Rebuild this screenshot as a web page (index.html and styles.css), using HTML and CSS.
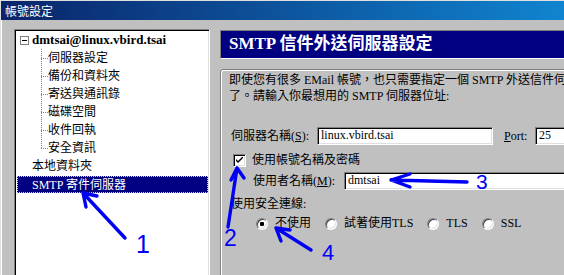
FILE: index.html
```html
<!DOCTYPE html>
<html lang="zh-Hant">
<head>
<meta charset="utf-8">
<title>帳號設定</title>
<link rel="stylesheet" href="styles.css">
</head>
<body>
<div class="window">
  <div class="titlebar">帳號設定</div>
  <div class="content">
    <div class="tree">
      <div class="row account"><span class="expander"><span class="minus"></span></span><span class="acct-name">dmtsai@linux.vbird.tsai</span></div>
      <div class="row child">伺服器設定</div>
      <div class="row child">備份和資料夾</div>
      <div class="row child">寄送與通訊錄</div>
      <div class="row child">磁碟空間</div>
      <div class="row child">收件回執</div>
      <div class="row child last">安全資訊</div>
      <div class="row top">本地資料夾</div>
      <div class="row top selected">SMTP 寄件伺服器</div>
    </div>
    <div class="main">
      <div class="header">SMTP 信件外送伺服器設定</div>
      <div class="group">
        <div class="desc">即使您有很多 EMail 帳號，也只需要指定一個 SMTP 外送信件伺服器，</div>
        <div class="desc">了。請輸入你最想用的 SMTP 伺服器位址:</div>
        <div class="field-row server-row">
          <span class="label server-label">伺服器名稱(<u>S</u>):</span>
          <span class="input server-input">linux.vbird.tsai</span>
          <span class="label port-label"><u>P</u>ort:</span>
          <span class="input port-input">25</span>
        </div>
        <div class="field-row check-row">
          <span class="checkbox"><svg width="7" height="7" viewBox="0 0 7 7"><path d="M0 2 L0 4 L2 6 L7 1 L7 -1 L2 4 Z" fill="#000"/></svg></span>
          <span class="check-label">使用帳號名稱及密碼</span>
        </div>
        <div class="field-row user-row">
          <span class="label user-label">使用者名稱(<u>M</u>):</span>
          <span class="input user-input">dmtsai</span>
        </div>
        <div class="sec-label">使用安全連線:</div>
        <div class="field-row radio-row">
          <span class="radio-item"><span class="radio checked"></span><span>不使用</span></span>
          <span class="radio-item"><span class="radio"></span><span>試著使用TLS</span></span>
          <span class="radio-item"><span class="radio"></span><span>TLS</span></span>
          <span class="radio-item"><span class="radio"></span><span>SSL</span></span>
        </div>
      </div>
    </div>
  </div>
</div>
<svg class="annot" width="564" height="275" viewBox="0 0 564 275">
  <g stroke="#0000f5" stroke-width="3.4" stroke-linecap="round" stroke-linejoin="round" fill="none">
    <path d="M125 238 L83 193 M83 193 L97 196 M83 193 L86 207"/>
    <path d="M228 227 L237 168 M237 168 L231 180 M237 168 L244 178"/>
    <path d="M467 182 L391 180 M391 180 L410 174 M391 180 L410 187"/>
    <path d="M311 250 L276 228 M276 228 L290 230 M276 228 L281 241"/>
  </g>
  <g fill="#0000f5" font-family="Liberation Sans, sans-serif">
    <text x="136" y="253" font-size="25">1</text>
    <text x="224" y="246" font-size="23">2</text>
    <text x="476" y="189" font-size="21">3</text>
    <text x="322" y="260" font-size="22">4</text>
  </g>
</svg>
</body>
</html>
```
FILE: styles.css
```css
html, body {
  margin: 0;
  padding: 0;
}
body {
  position: relative;
  width: 564px;
  height: 275px;
  overflow: hidden;
  background: #c0c0c0;
  font-family: "Liberation Serif", "Noto Sans CJK TC", serif;
  font-size: 12px;
  color: #000;
}
.window {
  width: 564px;
  height: 275px;
  box-sizing: border-box;
  overflow: hidden;
  border-top: 1px solid #dfdfdf;
  border-left: 1px solid #dfdfdf;
  background: #c0c0c0;
}
.titlebar {
  height: 19px;
  line-height: 19px;
  padding-left: 4px;
  color: #fff;
  font-family: "Noto Sans CJK TC", sans-serif;
  font-size: 12px;
  background: linear-gradient(to right, #0a246a, #1084d0);
}
.content {
  display: flex;
  align-items: flex-start;
  border-left: 1px solid #fff;
  padding-left: 12px;
  height: 260px;
}
.tree {
  flex: 0 0 auto;
  width: 196px;
  height: 260px;
  margin-top: 9px;
  box-sizing: border-box;
  background: #fff;
  border: 1px solid;
  border-color: #808080 #fff #fff #808080;
  box-shadow: inset 1px 1px #000, inset -1px -1px #dfdfdf;
  padding-top: 1px;
}
.row {
  height: 18px;
  line-height: 18px;
  white-space: nowrap;
  display: flex;
  align-items: center;
}
.account {
  padding-left: 5px;
}
.expander {
  width: 7px;
  height: 7px;
  border: 1px solid #808080;
  background: #fff;
  display: flex;
  align-items: center;
  justify-content: center;
  margin-right: 3px;
}
.minus {
  width: 5px;
  height: 1px;
  background: #000;
}
.acct-name {
  font-weight: bold;
  font-size: 13px;
}
.child {
  padding-left: 33px;
  background-image:
    repeating-linear-gradient(to bottom, #808080 0 1px, transparent 1px 2px),
    repeating-linear-gradient(to right, #808080 0 1px, transparent 1px 2px);
  background-size: 1px 18px, 7px 1px;
  background-position: 26px 0, 26px 9px;
  background-repeat: no-repeat;
}
.child.last {
  background-size: 1px 10px, 7px 1px;
}
.top {
  padding-left: 17px;
}
.selected {
  margin: 1px 1px 0 2px;
  padding-left: 15px;
  height: 17px;
  background: #000080;
  color: #fff;
  outline: 1px dotted #d8d8b0;
  outline-offset: -1px;
}
.main {
  flex: 0 0 420px;
  margin-left: 10px;
  margin-top: 10px;
}
.header {
  height: 29px;
  box-sizing: border-box;
  border: 1px solid;
  border-color: #808080 #fff #fff #808080;
  background: #000080;
  color: #fff;
  font-size: 17px;
  font-weight: bold;
  line-height: 26px;
  padding-left: 8px;
  white-space: nowrap;
}
.group {
  margin-top: 10px;
  height: 240px;
  border: 1px solid #808080;
  border-radius: 3px 0 0 0;
  box-shadow: inset 1px 1px #fff;
  padding: 2px 0 0 8px;
}
.desc {
  height: 16px;
  line-height: 16px;
  white-space: nowrap;
}
.field-row {
  display: flex;
  align-items: center;
  white-space: nowrap;
  overflow: visible;
}
.input {
  box-sizing: border-box;
  height: 18px;
  line-height: 14px;
  background: #fff;
  border: 1px solid;
  border-color: #808080 #fff #fff #808080;
  box-shadow: inset 1px 1px #000, inset -1px -1px #dfdfdf;
  padding-left: 3px;
  white-space: nowrap;
}
.label {
  line-height: 18px;
}
.server-row {
  height: 18px;
  margin-top: 23px;
  padding-left: 2px;
}
.server-label {
  width: 86px;
}
.server-input {
  width: 176px;
}
.port-label {
  margin-left: 11px;
  width: 31px;
}
.port-input {
  width: 60px;
}
.check-row {
  height: 13px;
  line-height: 13px;
  margin-top: 9px;
  padding-left: 4px;
}
.checkbox {
  box-sizing: border-box;
  width: 13px;
  height: 13px;
  background: #fff;
  border: 1px solid;
  border-color: #808080 #fff #fff #808080;
  box-shadow: inset 1px 1px #000, inset -1px -1px #dfdfdf;
  display: flex;
  align-items: center;
  justify-content: center;
}
.check-label {
  margin-left: 6px;
  line-height: 13px;
}
.user-row {
  height: 18px;
  margin-top: 5px;
  padding-left: 24px;
}
.user-label {
  width: 91px;
}
.user-input {
  width: 240px;
}
.sec-label {
  height: 16px;
  margin-top: 6px;
  padding-left: 2px;
  line-height: 16px;
}
.radio-row {
  height: 13px;
  line-height: 13px;
  margin-top: 5px;
  padding-left: 27px;
}
.radio-item {
  display: flex;
  align-items: center;
  margin-right: 14px;
}
.radio {
  box-sizing: border-box;
  width: 12px;
  height: 12px;
  margin-right: 7px;
  border-radius: 50%;
  border: 1px solid;
  border-color: #808080 #fff #fff #808080;
  box-shadow: inset 1px 1px #404040, inset -1px -1px #dfdfdf;
  background: #fff;
}
.radio.checked {
  background: radial-gradient(circle, #000 0 2px, #fff 2.5px);
}
.annot {
  position: absolute;
  left: 0;
  top: 0;
  pointer-events: none;
}
```
